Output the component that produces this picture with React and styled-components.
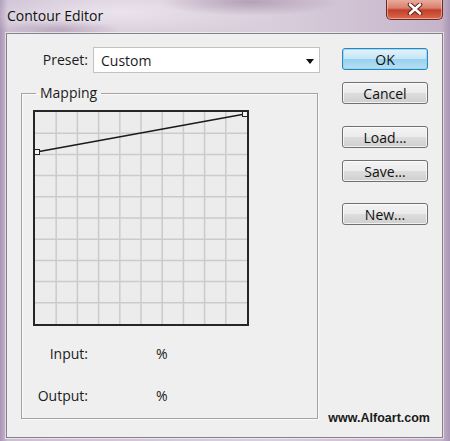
import React from 'react'
import styled, { createGlobalStyle } from 'styled-components'

const Global = createGlobalStyle`
  html, body {
    margin: 0;
    padding: 0;
  }
  body {
    font-family: "Open Sans", "Noto Sans", sans-serif;
    color: #1b1b1b;
  }
`

const S = {
  Window: styled.div`
    width: 450px;
    height: 441px;
    box-sizing: border-box;
    padding-bottom: 3px;
    display: flex;
    flex-direction: column;
    overflow: hidden;
    background:
      radial-gradient(ellipse 90px 14px at 250px 2px, rgba(150, 120, 150, 0.55), transparent),
      radial-gradient(ellipse 60px 10px at 60px 30px, rgba(140, 110, 140, 0.35), transparent),
      radial-gradient(ellipse 160px 30px at 120px 12px, rgba(240, 235, 242, 0.8), transparent),
      linear-gradient(90deg, #a995b5 0px, #cdbfd2 8px, #d9cfdc 60%, #c6b5ca 98%, #a995b5 100%);
  `,
  TitleBar: styled.div`
    height: 33px;
    flex-shrink: 0;
    display: flex;
    justify-content: space-between;
    align-items: flex-start;
    padding-left: 7px;
  `,
  Title: styled.div`
    margin-top: 6px;
    font-size: 14px;
    line-height: 19px;
    color: #111;
    text-shadow: 0 0 8px rgba(255, 255, 255, 0.9);
  `,
  Close: styled.div`
    width: 57px;
    height: 21px;
    margin-top: -1px;
    margin-right: 7px;
    box-sizing: border-box;
    border: 1px solid #6e2a22;
    border-top: none;
    border-radius: 0 0 5px 5px;
    background: linear-gradient(#eab0a2 0%, #d9806b 45%, #c23f28 55%, #d86a4f 100%);
    box-shadow: inset 0 0 0 1px rgba(255, 220, 210, 0.5);
    display: flex;
    align-items: center;
    justify-content: center;
  `,
  Client: styled.div`
    flex: 1;
    margin: 0 7px 0 6px;
    box-sizing: border-box;
    border: 1px solid #85808a;
    box-shadow: 0 0 0 1px rgba(255, 255, 255, 0.55);
    background: #efefef;
    display: flex;
    gap: 9px;
    padding: 13px 12px 0 14px;
  `,
  Left: styled.div`
    width: 299px;
    display: flex;
    flex-direction: column;
  `,
  PresetRow: styled.div`
    display: flex;
    align-items: center;
    height: 26px;
  `,
  Label: styled.div`
    width: ${p => p.$width}px;
    flex-shrink: 0;
    box-sizing: border-box;
    padding-right: 5px;
    text-align: right;
    font-size: 14px;
    line-height: 16px;
  `,
  Select: styled.div`
    flex: 1;
    height: 26px;
    box-sizing: border-box;
    border: 1px solid #c2c2c2;
    background: #fff;
    display: flex;
    align-items: center;
    justify-content: space-between;
    padding: 0 5px 0 7px;
    font-size: 14px;
  `,
  Arrow: styled.span`
    width: 0;
    height: 0;
    border-left: 4px solid transparent;
    border-right: 4px solid transparent;
    border-top: 5px solid #111;
    margin-top: 2px;
  `,
  Group: styled.fieldset`
    margin: 12px 0 0;
    padding: 0 0 14px 11px;
    min-width: 0;
    width: 297px;
    box-sizing: border-box;
    border: 1px solid #a3a3a3;
    box-shadow: inset 1px 1px 0 #fafafa, 1px 1px 0 #fafafa;
  `,
  Legend: styled.legend`
    margin-left: 3px;
    padding: 0 4px;
    font-size: 14px;
    line-height: 16px;
  `,
  Graph: styled.svg`
    display: block;
    margin-top: 9px;
  `,
  ValueRow: styled.div`
    display: flex;
    align-items: center;
    height: 16px;
    margin-top: ${p => p.$top}px;
  `,
  Percent: styled.div`
    margin-left: 63px;
    font-size: 14px;
    line-height: 16px;
  `,
  Right: styled.div`
    width: 101px;
    display: flex;
    flex-direction: column;
    align-items: flex-end;
    padding-top: 1px;
  `,
  Buttons: styled.div`
    display: flex;
    flex-direction: column;
    gap: 12px;
    margin-right: 2px;
    margin-top: ${p => p.$top || 0}px;
  `,
  Button: styled.div`
    width: 86px;
    height: 22px;
    box-sizing: border-box;
    border: 1px solid ${p => (p.$primary ? '#3c7fb1' : '#707070')};
    border-radius: 3px;
    background: ${p =>
      p.$primary
        ? 'linear-gradient(#e5f4fc 0%, #c4e5f6 50%, #98d1ef 51%, #b6e0f3 100%)'
        : 'linear-gradient(#f3f3f3 0%, #ebebeb 50%, #dddddd 51%, #cfcfcf 100%)'};
    box-shadow: inset 0 0 0 1px ${p => (p.$primary ? 'rgba(120, 220, 255, 0.8)' : 'rgba(255, 255, 255, 0.7)')};
    display: flex;
    align-items: center;
    justify-content: center;
    font-size: 14px;
    color: #111;
  `,
  Watermark: styled.div`
    margin-top: auto;
    margin-bottom: 12px;
    font-family: "Liberation Sans", Arial, sans-serif;
    font-weight: bold;
    font-size: 12.5px;
    line-height: 14px;
    white-space: nowrap;
    color: #1a1a1a;
  `,
}

const GRID = Array.from({ length: 9 }, (_, i) => 2 + (i + 1) * 21.2)

const ContourGraph = () => (
  <S.Graph width="216" height="216" viewBox="0 0 216 216">
    <rect x="0" y="0" width="216" height="216" fill="#ececec" />
    {GRID.map(v => (
      <g key={v} stroke="#cbcbcb" strokeWidth="1.5">
        <line x1={v} y1="2" x2={v} y2="214" />
        <line x1="2" y1={v} x2="214" y2={v} />
      </g>
    ))}
    <rect x="1" y="1" width="214" height="214" fill="none" stroke="#262626" strokeWidth="2" />
    <line x1="3.5" y1="42" x2="212" y2="4" stroke="#1a1a1a" strokeWidth="1.4" />
    <rect x="1.5" y="39.5" width="5" height="5" fill="#f4f4f4" stroke="#222" strokeWidth="1" />
    <rect x="209.5" y="1.5" width="5" height="5" fill="#f4f4f4" stroke="#222" strokeWidth="1" />
  </S.Graph>
)

const CloseIcon = () => (
  <svg width="16" height="12" viewBox="0 0 16 12">
    <path d="M3 1.5 L13 10.5 M13 1.5 L3 10.5" stroke="#5a1d16" strokeWidth="4.5" strokeLinecap="round" />
    <path d="M3 1.5 L13 10.5 M13 1.5 L3 10.5" stroke="#fff" strokeWidth="2.6" strokeLinecap="round" />
  </svg>
)

const App = () => (
  <>
    <Global />
    <S.Window>
      <S.TitleBar>
        <S.Title>Contour Editor</S.Title>
        <S.Close>
          <CloseIcon />
        </S.Close>
      </S.TitleBar>
      <S.Client>
        <S.Left>
          <S.PresetRow>
            <S.Label $width={72}>Preset:</S.Label>
            <S.Select>
              <span>Custom</span>
              <S.Arrow />
            </S.Select>
          </S.PresetRow>
          <S.Group>
            <S.Legend>Mapping</S.Legend>
            <ContourGraph />
            <S.ValueRow $top={20}>
              <S.Label $width={60}>Input:</S.Label>
              <S.Percent>%</S.Percent>
            </S.ValueRow>
            <S.ValueRow $top={26}>
              <S.Label $width={60}>Output:</S.Label>
              <S.Percent>%</S.Percent>
            </S.ValueRow>
          </S.Group>
        </S.Left>
        <S.Right>
          <S.Buttons>
            <S.Button $primary>OK</S.Button>
            <S.Button>Cancel</S.Button>
          </S.Buttons>
          <S.Buttons $top={22}>
            <S.Button>Load...</S.Button>
            <S.Button>Save...</S.Button>
          </S.Buttons>
          <S.Buttons $top={21}>
            <S.Button>New...</S.Button>
          </S.Buttons>
          <S.Watermark>www.Alfoart.com</S.Watermark>
        </S.Right>
      </S.Client>
    </S.Window>
  </>
)

export default App
